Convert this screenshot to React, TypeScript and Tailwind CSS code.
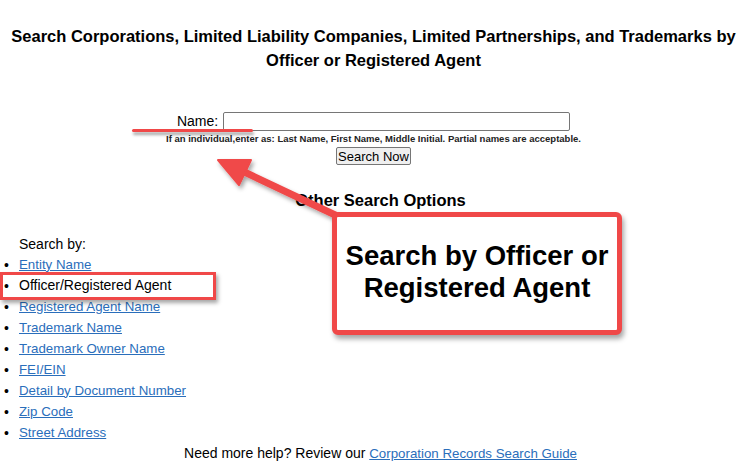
import type { ReactNode } from "react";

const links = [
  "Entity Name",
  "Officer/Registered Agent",
  "Registered Agent Name",
  "Trademark Name",
  "Trademark Owner Name",
  "FEI/EIN",
  "Detail by Document Number",
  "Zip Code",
  "Street Address",
];

function Bullet({ children }: { children: ReactNode }) {
  return (
    <li className="flex h-[21px] items-center">
      <span className="w-[19px] pl-[4px] text-[14px] leading-none">•</span>
      {children}
    </li>
  );
}

export default function App() {
  return (
    <div
      className="relative h-[471px] w-[747px] overflow-hidden bg-white text-black"
      style={{ fontFamily: '"Liberation Sans", Arial, sans-serif' }}
    >
      <h2 className="px-1 pt-[24px] text-center text-[16.5px] leading-[24px] font-bold">
        Search Corporations, Limited Liability Companies, Limited Partnerships, and Trademarks by
        <br />
        Officer or Registered Agent
      </h2>

      <form className="mt-[39px] flex flex-col items-center">
        <div className="flex items-center gap-[5px] text-[14px]">
          <label>Name:</label>
          <input
            type="text"
            className="h-[19px] w-[347px] rounded-[2px] border border-[#767676] bg-white"
          />
        </div>
        <p className="mt-[1px] text-[9.5px] leading-[12px] font-semibold text-[#222]">
          If an individual,enter as: Last Name, First Name, Middle Initial. Partial names are acceptable.
        </p>
        <button
          type="button"
          className="mt-[2px] h-[18px] rounded-[2px] border border-[#767676] bg-[#efefef] px-[1px] text-[13px] leading-none"
        >
          Search Now
        </button>
      </form>

      <h3 className="mt-[25px] pl-[14px] text-center text-[16.5px] leading-[20px] font-bold">
        Other Search Options
      </h3>

      <div className="mt-[24px] pl-[19px] text-[14px] leading-[21px]">Search by:</div>
      <ul className="-mt-[1px] text-[14px]">
        {links.map((l) => (
          <Bullet key={l}>
            {l === "Officer/Registered Agent" ? (
              <span>{l}</span>
            ) : (
              <a href="#" className="text-[13.3px] text-[#2a6ebb] underline">
                {l}
              </a>
            )}
          </Bullet>
        ))}
      </ul>
      <p className="pl-[14px] text-center text-[14px] leading-[21px]">
        Need more help? Review our{" "}
        <a href="#" className="text-[13.3px] text-[#2a6ebb] underline">
          Corporation Records Search Guide
        </a>
      </p>

      {/* annotations */}
      <div className="absolute left-[132px] top-[129px] h-[3px] w-[121px] rounded-full bg-[#f04848] shadow-[1px_3px_3px_rgba(0,0,0,0.35)]" />
      <div className="absolute left-0 top-[272px] h-[28px] w-[216px] border-[3px] border-[#f04848] shadow-[2px_3px_4px_rgba(0,0,0,0.35)]" />
      <svg className="absolute left-0 top-0" width="747" height="471" viewBox="0 0 747 471">
        <defs>
          <filter id="sh" x="-20%" y="-20%" width="140%" height="140%">
            <feDropShadow dx="2" dy="3" stdDeviation="2" floodColor="#000" floodOpacity="0.35" />
          </filter>
        </defs>
        <g filter="url(#sh)" fill="#f04848" stroke="#f04848">
          <line x1="350" y1="222" x2="236" y2="168" strokeWidth="7" />
          <polygon points="218,160 251,160 239,185" strokeWidth="2" strokeLinejoin="round" />
        </g>
      </svg>
      <div className="absolute left-[332px] top-[212px] flex h-[123px] w-[290px] items-center justify-center rounded-[6px] border-[5px] border-[#f04848] bg-white pb-[4px] shadow-[2px_4px_5px_rgba(0,0,0,0.35)]">
        <p className="text-center text-[27.5px] leading-[32px] font-bold">
          Search by Officer or
          <br />
          Registered Agent
        </p>
      </div>
    </div>
  );
}
